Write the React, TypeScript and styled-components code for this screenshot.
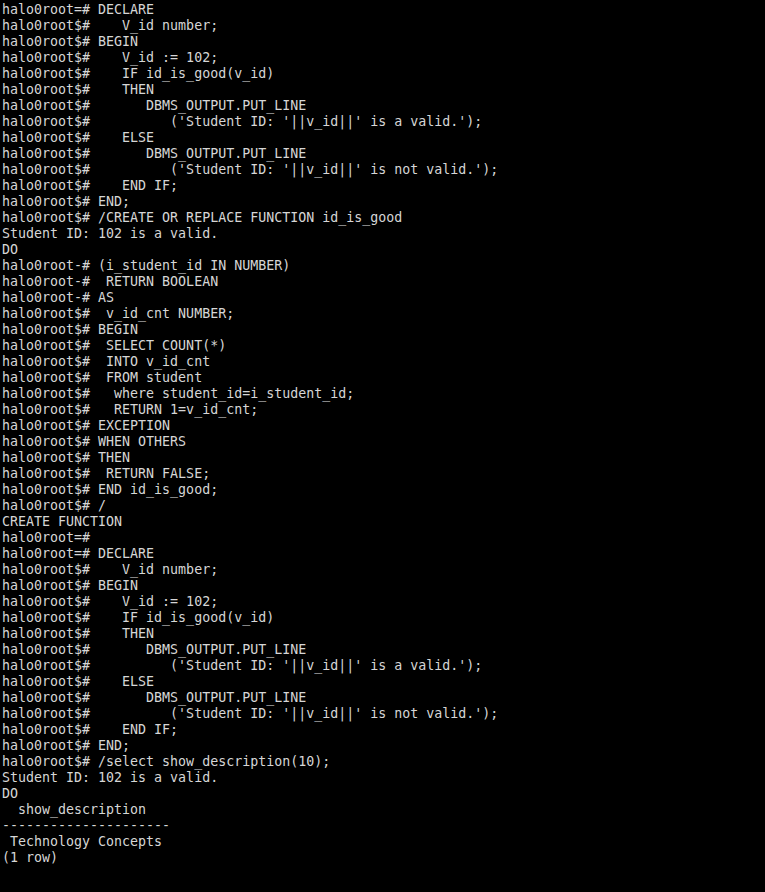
import React from "react";
import styled, { createGlobalStyle } from "styled-components";

const Global = createGlobalStyle`
  html, body {
    margin: 0;
    padding: 0;
    background: #000000;
  }
  #root {
    min-height: 892px;
    background: #000000;
  }
`;

const Terminal = styled.div`
  display: flex;
  flex-direction: column;
  padding: 2px 0 0 2px;
  background: #000000;
  color: #d6d6d6;
  font-family: "DejaVu Sans Mono", "Liberation Mono", monospace;
  font-size: 13.3px;
  line-height: 16px;
`;

const Line = styled.div`
  white-space: pre;
  height: 16px;
`;

const block = [
  "halo0root$#    V_id number;",
  "halo0root$# BEGIN",
  "halo0root$#    V_id := 102;",
  "halo0root$#    IF id_is_good(v_id)",
  "halo0root$#    THEN",
  "halo0root$#       DBMS_OUTPUT.PUT_LINE",
  "halo0root$#          ('Student ID: '||v_id||' is a valid.');",
  "halo0root$#    ELSE",
  "halo0root$#       DBMS_OUTPUT.PUT_LINE",
  "halo0root$#          ('Student ID: '||v_id||' is not valid.');",
  "halo0root$#    END IF;",
  "halo0root$# END;",
];

const lines: string[] = [
  "halo0root=# DECLARE",
  ...block,
  "halo0root$# /CREATE OR REPLACE FUNCTION id_is_good",
  "Student ID: 102 is a valid.",
  "DO",
  "halo0root-# (i_student_id IN NUMBER)",
  "halo0root-#  RETURN BOOLEAN",
  "halo0root-# AS",
  "halo0root$#  v_id_cnt NUMBER;",
  "halo0root$# BEGIN",
  "halo0root$#  SELECT COUNT(*)",
  "halo0root$#  INTO v_id_cnt",
  "halo0root$#  FROM student",
  "halo0root$#   where student_id=i_student_id;",
  "halo0root$#   RETURN 1=v_id_cnt;",
  "halo0root$# EXCEPTION",
  "halo0root$# WHEN OTHERS",
  "halo0root$# THEN",
  "halo0root$#  RETURN FALSE;",
  "halo0root$# END id_is_good;",
  "halo0root$# /",
  "CREATE FUNCTION",
  "halo0root=#",
  "halo0root=# DECLARE",
  ...block,
  "halo0root$# /select show_description(10);",
  "Student ID: 102 is a valid.",
  "DO",
  "  show_description",
  "---------------------",
  " Technology Concepts",
  "(1 row)",
];

export default function App() {
  return (
    <>
      <Global />
      <Terminal>
        {lines.map((l, i) => (
          <Line key={i}>{l}</Line>
        ))}
      </Terminal>
    </>
  );
}
